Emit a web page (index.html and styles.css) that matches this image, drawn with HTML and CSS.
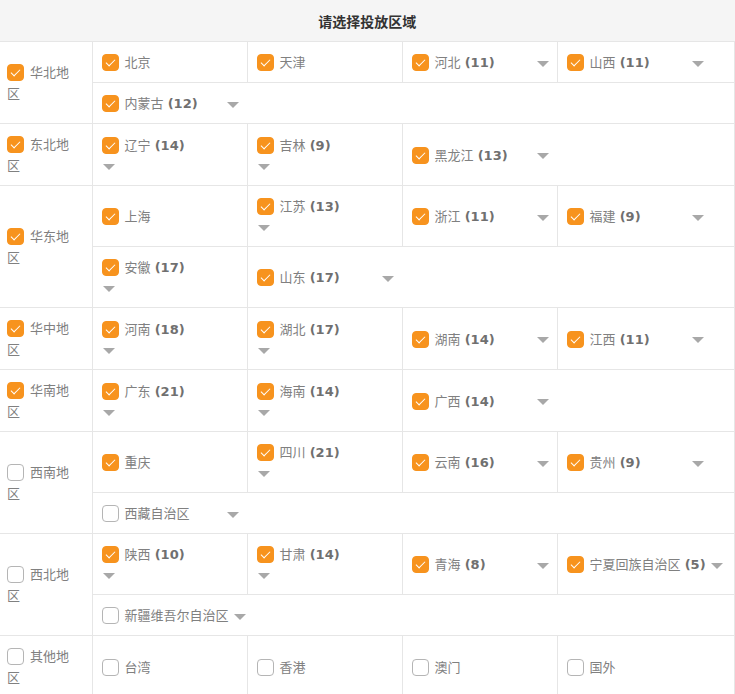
FILE: index.html
```html
<!DOCTYPE html>
<html lang="zh-CN">
<head>
    <meta charset="UTF-8">
    <meta name="viewport" content="width=device-width, initial-scale=1.0">
    <title>请选择投放区域</title>
    <link rel="stylesheet" href="styles.css">
</head>
<body>
    <table class="area-table">
        <colgroup>
            <col class="col-region">
            <col class="col-prov">
            <col class="col-prov">
            <col class="col-prov">
            <col>
        </colgroup>
        <thead>
            <tr>
                <th colspan="5">请选择投放区域</th>
            </tr>
        </thead>
        <tbody>
            <!-- 华北 -->
            <tr>
                <td class="region" rowspan="2"><label><span class="box on"></span>华北地区</label></td>
                <td><label class="item"><span class="box on"></span>北京</label></td>
                <td><label class="item"><span class="box on"></span>天津</label></td>
                <td><label class="item has-arrow"><span class="box on"></span>河北 <b>(11)</b></label><i class="arrow"></i></td>
                <td><label class="item has-arrow"><span class="box on"></span>山西 <b>(11)</b></label><i class="arrow"></i></td>
            </tr>
            <tr>
                <td colspan="4"><label class="item has-arrow"><span class="box on"></span>内蒙古 <b>(12)</b></label><i class="arrow"></i></td>
            </tr>

            <!-- 东北 -->
            <tr>
                <td class="region"><label><span class="box on"></span>东北地区</label></td>
                <td class="stack"><label class="item"><span class="box on"></span>辽宁 <b>(14)</b></label><i class="arrow"></i></td>
                <td class="stack"><label class="item"><span class="box on"></span>吉林 <b>(9)</b></label><i class="arrow"></i></td>
                <td colspan="2"><label class="item has-arrow"><span class="box on"></span>黑龙江 <b>(13)</b></label><i class="arrow"></i></td>
            </tr>

            <!-- 华东 -->
            <tr>
                <td class="region" rowspan="2"><label><span class="box on"></span>华东地区</label></td>
                <td><label class="item"><span class="box on"></span>上海</label></td>
                <td class="stack"><label class="item"><span class="box on"></span>江苏 <b>(13)</b></label><i class="arrow"></i></td>
                <td><label class="item has-arrow"><span class="box on"></span>浙江 <b>(11)</b></label><i class="arrow"></i></td>
                <td><label class="item has-arrow"><span class="box on"></span>福建 <b>(9)</b></label><i class="arrow"></i></td>
            </tr>
            <tr>
                <td class="stack"><label class="item"><span class="box on"></span>安徽 <b>(17)</b></label><i class="arrow"></i></td>
                <td colspan="3"><label class="item has-arrow"><span class="box on"></span>山东 <b>(17)</b></label><i class="arrow"></i></td>
            </tr>

            <!-- 华中 -->
            <tr>
                <td class="region"><label><span class="box on"></span>华中地区</label></td>
                <td class="stack"><label class="item"><span class="box on"></span>河南 <b>(18)</b></label><i class="arrow"></i></td>
                <td class="stack"><label class="item"><span class="box on"></span>湖北 <b>(17)</b></label><i class="arrow"></i></td>
                <td><label class="item has-arrow"><span class="box on"></span>湖南 <b>(14)</b></label><i class="arrow"></i></td>
                <td><label class="item has-arrow"><span class="box on"></span>江西 <b>(11)</b></label><i class="arrow"></i></td>
            </tr>

            <!-- 华南 -->
            <tr>
                <td class="region"><label><span class="box on"></span>华南地区</label></td>
                <td class="stack"><label class="item"><span class="box on"></span>广东 <b>(21)</b></label><i class="arrow"></i></td>
                <td class="stack"><label class="item"><span class="box on"></span>海南 <b>(14)</b></label><i class="arrow"></i></td>
                <td colspan="2"><label class="item has-arrow"><span class="box on"></span>广西 <b>(14)</b></label><i class="arrow"></i></td>
            </tr>

            <!-- 西南 -->
            <tr>
                <td class="region" rowspan="2"><label><span class="box"></span>西南地区</label></td>
                <td><label class="item"><span class="box on"></span>重庆</label></td>
                <td class="stack"><label class="item"><span class="box on"></span>四川 <b>(21)</b></label><i class="arrow"></i></td>
                <td><label class="item has-arrow"><span class="box on"></span>云南 <b>(16)</b></label><i class="arrow"></i></td>
                <td><label class="item has-arrow"><span class="box on"></span>贵州 <b>(9)</b></label><i class="arrow"></i></td>
            </tr>
            <tr>
                <td colspan="4"><label class="item has-arrow"><span class="box"></span>西藏自治区</label><i class="arrow"></i></td>
            </tr>

            <!-- 西北 -->
            <tr>
                <td class="region" rowspan="2"><label><span class="box"></span>西北地区</label></td>
                <td class="stack"><label class="item"><span class="box on"></span>陕西 <b>(10)</b></label><i class="arrow"></i></td>
                <td class="stack"><label class="item"><span class="box on"></span>甘肃 <b>(14)</b></label><i class="arrow"></i></td>
                <td><label class="item has-arrow"><span class="box on"></span>青海 <b>(8)</b></label><i class="arrow"></i></td>
                <td><label class="item has-arrow"><span class="box on"></span>宁夏回族自治区 <b>(5)</b></label><i class="arrow"></i></td>
            </tr>
            <tr>
                <td colspan="4"><label class="item has-arrow"><span class="box"></span>新疆维吾尔自治区</label><i class="arrow"></i></td>
            </tr>

            <!-- 其他 -->
            <tr>
                <td class="region"><label><span class="box"></span>其他地区</label></td>
                <td><label class="item"><span class="box"></span>台湾</label></td>
                <td><label class="item"><span class="box"></span>香港</label></td>
                <td><label class="item"><span class="box"></span>澳门</label></td>
                <td><label class="item"><span class="box"></span>国外</label></td>
            </tr>
        </tbody>
    </table>
</body>
</html>
```

FILE: styles.css
```css
body {
    margin: 0;
    background-color: #fff;
    font-family: "DejaVu Sans", "Noto Sans CJK SC", sans-serif;
    font-size: 13px;
    color: #808080;
}

.area-table {
    width: 100%;
    border-collapse: collapse;
    table-layout: fixed;
}

.col-region {
    width: 92px;
}

.col-prov {
    width: 155px;
}

th {
    height: 41px;
    padding: 0;
    background-color: #f5f5f5;
    border-bottom: 1px solid #e6e6e6;
    font-family: "Noto Sans CJK SC", sans-serif;
    font-size: 14px;
    font-weight: bold;
    color: #333;
    text-align: center;
}

td {
    padding: 10px 9px 9px;
    border: 1px solid #e6e6e6;
    line-height: 21px;
    vertical-align: middle;
    white-space: nowrap;
}

tr td:first-child {
    border-left: none;
}

/* 大区列：文字换行 */
.region {
    padding-left: 7px;
    white-space: normal;
}

.region label {
    display: block;
    width: 66px;
}

.item {
    display: inline-block;
}

.has-arrow {
    min-width: 120px;
}

b {
    font-weight: bold;
    color: #707070;
}

/* 复选框 */
.box {
    display: inline-block;
    position: relative;
    width: 15px;
    height: 15px;
    margin-right: 6px;
    border: 1px solid #b5b5b5;
    border-radius: 4px;
    background-color: #fff;
    vertical-align: -4px;
}

.box.on {
    border-color: #f7931e;
    background-color: #f7931e;
}

.box.on::after {
    content: "";
    position: absolute;
    left: 5px;
    top: 2px;
    width: 4px;
    height: 8px;
    border: solid #fff;
    border-width: 0 1.5px 1.5px 0;
    transform: rotate(45deg);
}

/* 下拉箭头 */
.arrow {
    display: inline-block;
    width: 0;
    height: 0;
    margin-left: 5px;
    border-left: 6px solid transparent;
    border-right: 6px solid transparent;
    border-top: 6px solid #a8a8a8;
    vertical-align: middle;
}

.stack .arrow {
    display: block;
    margin: 8px 0 6px 1px;
}
```
